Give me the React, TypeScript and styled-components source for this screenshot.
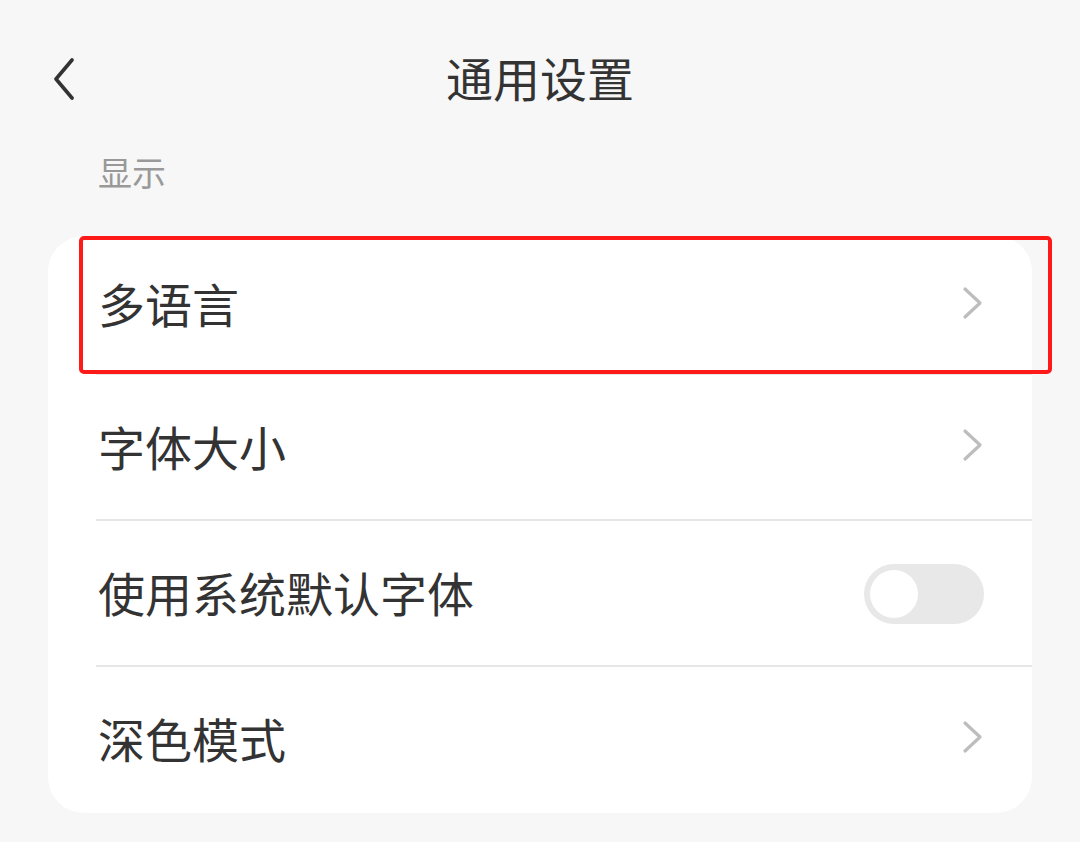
import React from "react";
import styled, { createGlobalStyle } from "styled-components";

const Global = createGlobalStyle`
  html, body { margin: 0; padding: 0; background: #f7f7f7; }
  body { font-family: "Noto Sans CJK SC", "Noto Sans", sans-serif; }
`;

const Page = styled.div`
  width: 1080px;
  height: 842px;
  background: #f7f7f7;
  display: flex;
  flex-direction: column;
  overflow: hidden;
`;

const HeaderInner = styled.div`
  height: 156px;
  width: 100%;
  display: grid;
  grid-template-columns: 120px 1fr 120px;
  align-items: start;
`;

const BackBtn = styled.div`
  padding: 58px 0 0 52px;
  display: flex;
`;

const Title = styled.div`
  text-align: center;
  font-size: 47px;
  line-height: 1;
  color: #333;
  padding-top: 53px;
`;

const SectionLabel = styled.div`
  font-size: 34px;
  line-height: 1;
  color: #999;
  padding-left: 98px;
  margin-top: -1px;
`;

const CardWrap = styled.div`
  position: relative;
  margin: 47px 48px 0 48px;
`;

const Card = styled.div`
  background: #fff;
  border-radius: 36px;
  overflow: hidden;
`;

const Row = styled.div<{ $h: number; $divider?: boolean }>`
  height: ${(p) => p.$h}px;
  display: flex;
  align-items: center;
  justify-content: space-between;
  padding: 0 48px 6px 50px;
  position: relative;
  box-sizing: border-box;
  ${(p) =>
    p.$divider
      ? `&::after { content: ""; position: absolute; left: 48px; right: 0; bottom: 0; height: 2px; background: #e6e6e6; }`
      : ""}
`;

const RowText = styled.span`
  font-size: 47px;
  line-height: 1;
  color: #333;
`;

const Toggle = styled.div`
  width: 120px;
  height: 60px;
  border-radius: 30px;
  background: #e8e8e8;
  display: flex;
  align-items: center;
  padding-left: 6px;
  box-sizing: border-box;
  margin-right: -48px;
  transform: translate(-48px, 3px);
`;

const Knob = styled.div`
  width: 48px;
  height: 48px;
  border-radius: 50%;
  background: #fff;
`;

const Highlight = styled.div`
  position: absolute;
  left: 31px;
  top: 0;
  width: 973px;
  height: 138px;
  border: 4px solid #ff1a1a;
  border-radius: 5px;
  box-sizing: border-box;
  pointer-events: none;
`;

const Chevron = () => (
  <svg width="22" height="34" viewBox="0 0 22 34" fill="none">
    <path d="M3 3 L18 17 L3 31" stroke="#bdbdbd" strokeWidth="3.2" strokeLinecap="round" strokeLinejoin="round" />
  </svg>
);

const BackIcon = () => (
  <svg width="26" height="42" viewBox="0 0 26 42" fill="none">
    <path d="M20 2 L4 21 L20 40" stroke="#333" strokeWidth="3.6" strokeLinecap="round" strokeLinejoin="round" />
  </svg>
);

export default function App() {
  return (
    <Page>
      <Global />
      <HeaderInner>
        <BackBtn>
          <BackIcon />
        </BackBtn>
        <Title>通用设置</Title>
        <div />
      </HeaderInner>
      <SectionLabel>显示</SectionLabel>
      <CardWrap>
        <Card>
          <Row $h={139} $divider>
            <RowText>多语言</RowText>
            <Chevron />
          </Row>
          <Row $h={146} $divider>
            <RowText>字体大小</RowText>
            <Chevron />
          </Row>
          <Row $h={146} $divider>
            <RowText>使用系统默认字体</RowText>
            <Toggle>
              <Knob />
            </Toggle>
          </Row>
          <Row $h={146}>
            <RowText>深色模式</RowText>
            <Chevron />
          </Row>
        </Card>
        <Highlight />
      </CardWrap>
    </Page>
  );
}
